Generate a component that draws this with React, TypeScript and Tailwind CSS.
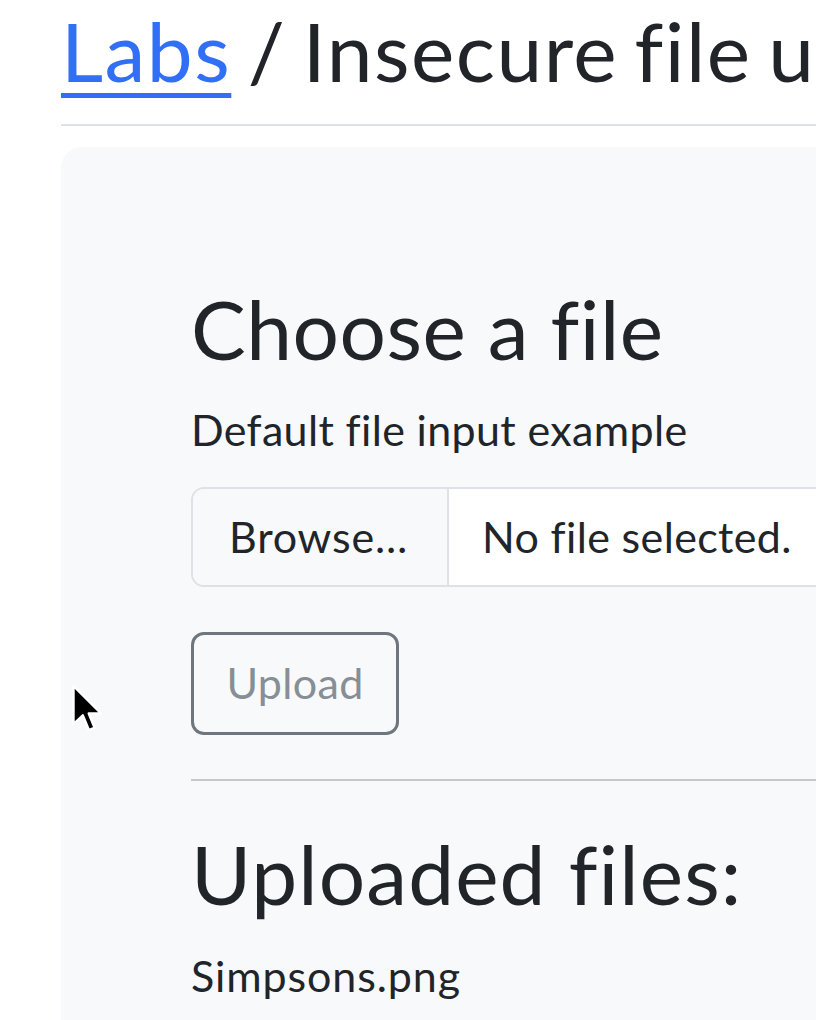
const files = ['Simpsons.png']

function Cursor() {
  return (
    <svg
      className="absolute left-[72px] top-[684px]"
      width="32"
      height="50"
      viewBox="0 0 13 20"
    >
      <path
        d="M0.6 0.6 L0.6 16.2 L4.4 12.6 L6.9 18.6 L9.2 17.6 L6.8 11.8 L11.8 11.8 Z"
        fill="#000"
        stroke="#fff"
        strokeWidth="1"
        strokeLinejoin="round"
      />
    </svg>
  )
}

export default function App() {
  return (
    <div
      className="relative w-[816px] h-[1020px] overflow-hidden bg-white text-[#212529] [font-variant-ligatures:none]"
      style={{ fontFamily: 'Lato, sans-serif' }}
    >
      <div className="ml-[61px] w-[1100px] pt-px">
        <h1 className="text-[82px] leading-[98px] whitespace-nowrap tracking-[1.5px] [word-spacing:-6px]">
          <a href="#" className="text-[#306ff6] underline decoration-[5px] underline-offset-[11px]">
            Labs
          </a>{' '}
          / Insecure file upload
        </h1>
        <hr className="mt-[25px] border-t-2 border-[#dee2e6]" />

        <div className="mt-[21px] bg-[#f8f9fa] rounded-tl-[21px] pl-[130px] pt-[132px] pb-[130px]">
          <h2 className="text-[82px] leading-[98px] tracking-[0.5px]">Choose a file</h2>
          <label className="block mt-[21px] text-[43px] leading-[64px] tracking-[0.35px]">
            Default file input example
          </label>

          <div className="mt-[25px] flex h-[100px] border-2 border-[#dee2e6] rounded-l-[13px] overflow-hidden text-[43px] tracking-[0.35px]">
            <div className="w-[256px] shrink-0 flex items-center pl-[36px] bg-[#f8f9fa] border-r-2 border-[#dee2e6] tracking-[0.8px]">
              Browse…
            </div>
            <div className="flex-1 flex items-center pl-[33px] bg-white">No file selected.</div>
          </div>

          <button
            disabled
            className="mt-[45px] flex items-center justify-center w-[208px] h-[103px] border-[3px] border-[#6f767d] rounded-[13px] text-[43px] text-[#868e96] tracking-[0.35px]"
          >
            Upload
          </button>

          <hr className="mt-[44px] border-t-2 border-[#c6c8ca]" />

          <h2 className="mt-[43px] text-[82px] leading-[98px] tracking-[1.1px]">Uploaded files:</h2>
          <ul className="mt-[22px]">
            {files.map(f => (
              <li key={f} className="text-[43px] leading-[64px] tracking-[0.9px]">{f}</li>
            ))}
          </ul>
        </div>
      </div>
      <Cursor />
    </div>
  )
}
